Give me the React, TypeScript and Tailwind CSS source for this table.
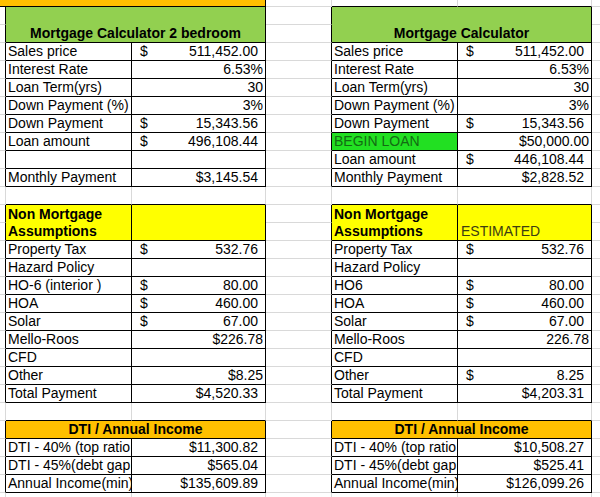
import React from "react";

type Spec = {
  r: number;
  c: number;
  rs: number;
  cs: number;
  table: boolean;
  cls: string;
  node: React.ReactNode;
};

const COLS = 7;
const ROWS = 29;

const lab = (t: string) => (
  <div className="pl-[2px] whitespace-nowrap overflow-hidden">{t}</div>
);
const acc = (v: string) => (
  <div className="flex justify-between pl-[8px] pr-[7px] whitespace-nowrap">
    <span>$</span>
    <span>{v}</span>
  </div>
);
const pad = (v: string) => (
  <div className="text-right pr-[7px] whitespace-nowrap">{v}</div>
);
const gen = (v: string) => (
  <div className="text-right pr-[2px] whitespace-nowrap">{v}</div>
);

const specs: Spec[] = [];
const add = (
  r: number,
  c: number,
  node: React.ReactNode,
  opts: Partial<Spec> = {}
) => {
  specs.push({ r, c, rs: 1, cs: 1, table: true, cls: "", node, ...opts });
};

// top orange strip
add(0, 0, null, { cs: 3, cls: "bg-[#ffc000]" });

const mortgageLeft: [React.ReactNode, React.ReactNode][] = [
  [lab("Sales price"), acc("511,452.00")],
  [lab("Interest Rate"), gen("6.53%")],
  [lab("Loan Term(yrs)"), gen("30")],
  [lab("Down Payment (%)"), gen("3%")],
  [lab("Down Payment"), acc("15,343.56")],
  [lab("Loan amount"), acc("496,108.44")],
  [null, null],
  [lab("Monthly Payment"), pad("$3,145.54")],
];

const mortgageRight: [React.ReactNode, React.ReactNode][] = [
  [lab("Sales price"), acc("511,452.00")],
  [lab("Interest Rate"), gen("6.53%")],
  [lab("Loan Term(yrs)"), gen("30")],
  [lab("Down Payment (%)"), gen("3%")],
  [lab("Down Payment"), acc("15,343.56")],
  [
    <div className="pl-[2px] whitespace-nowrap overflow-hidden text-[#136b13]">
      BEGIN LOAN
    </div>,
    gen("$50,000.00"),
  ],
  [lab("Loan amount"), acc("446,108.44")],
  [lab("Monthly Payment"), pad("$2,828.52")],
];

const nonLeft: [React.ReactNode, React.ReactNode][] = [
  [lab("Property Tax"), acc("532.76")],
  [lab("Hazard Policy"), null],
  [lab("HO-6 (interior )"), acc("80.00")],
  [lab("HOA"), acc("460.00")],
  [lab("Solar"), acc("67.00")],
  [lab("Mello-Roos"), gen("$226.78")],
  [lab("CFD"), null],
  [lab("Other"), gen("$8.25")],
  [lab("Total Payment"), pad("$4,520.33")],
];

const nonRight: [React.ReactNode, React.ReactNode][] = [
  [lab("Property Tax"), acc("532.76")],
  [lab("Hazard Policy"), null],
  [lab("HO6"), acc("80.00")],
  [lab("HOA"), acc("460.00")],
  [lab("Solar"), acc("67.00")],
  [lab("Mello-Roos"), gen("226.78")],
  [lab("CFD"), null],
  [lab("Other"), acc("8.25")],
  [lab("Total Payment"), pad("$4,203.31")],
];

const dtiLeft: [React.ReactNode, React.ReactNode][] = [
  [lab("DTI - 40% (top ratio"), pad("$11,300.82")],
  [lab("DTI - 45%(debt gap"), pad("$565.04")],
  [lab("Annual Income(min)"), pad("$135,609.89")],
];

const dtiRight: [React.ReactNode, React.ReactNode][] = [
  [lab("DTI - 40% (top ratio"), pad("$10,508.27")],
  [lab("DTI - 45%(debt gap"), pad("$525.41")],
  [lab("Annual Income(min)"), pad("$126,099.26")],
];

const buildTable = (
  c0: number,
  title: string,
  mort: [React.ReactNode, React.ReactNode][],
  non: [React.ReactNode, React.ReactNode][],
  dti: [React.ReactNode, React.ReactNode][],
  estimated: boolean,
  beginRow: number
) => {
  add(
    1,
    c0,
    <div className="h-full flex items-end justify-center font-bold whitespace-nowrap">
      {title}
    </div>,
    { rs: 2, cs: 2, cls: "bg-[#92d050]" }
  );
  mort.forEach(([a, b], i) => {
    const r = 3 + i;
    add(r, c0, a, { cls: r === beginRow ? "bg-[#22e022]" : "" });
    add(r, c0 + 1, b);
  });
  add(
    12,
    c0,
    <div className="h-full flex flex-col justify-end pl-[2px] font-bold whitespace-nowrap">
      <span>Non Mortgage</span>
      <span>Assumptions</span>
    </div>,
    { rs: 2, cls: "bg-[#ffff00]" }
  );
  add(
    12,
    c0 + 1,
    estimated ? (
      <div className="h-full flex items-end pl-[3px] text-[#3d3d12]">ESTIMATED</div>
    ) : null,
    { rs: 2, cls: "bg-[#ffff00]" }
  );
  non.forEach(([a, b], i) => {
    add(14 + i, c0, a);
    add(14 + i, c0 + 1, b);
  });
  add(
    24,
    c0,
    <div className="text-center font-bold whitespace-nowrap">DTI / Annual Income</div>,
    { cs: 2, cls: "bg-[#ffc000]" }
  );
  dti.forEach(([a, b], i) => {
    add(25 + i, c0, a);
    add(25 + i, c0 + 1, b);
  });
};

buildTable(1, "Mortgage Calculator 2 bedroom", mortgageLeft, nonLeft, dtiLeft, false, -1);
buildTable(4, "Mortgage Calculator", mortgageRight, nonRight, dtiRight, true, 8);

// occupancy
const owner: number[][] = Array.from({ length: ROWS }, () =>
  Array.from({ length: COLS }, () => -1)
);
specs.forEach((s, i) => {
  for (let rr = s.r; rr < s.r + s.rs; rr++)
    for (let cc = s.c; cc < s.c + s.cs; cc++) owner[rr][cc] = i;
});
const filler: Spec[] = [];
for (let r = 0; r < ROWS; r++)
  for (let c = 0; c < COLS; c++)
    if (owner[r][c] === -1)
      filler.push({ r, c, rs: 1, cs: 1, table: false, cls: "", node: null });

const all = [...specs, ...filler].sort((a, b) => a.r - b.r || a.c - b.c);

const isTbl = (r: number, c: number) => {
  if (r < 0 || r >= ROWS || c < 0 || c >= COLS) return false;
  const o = owner[r][c];
  return o >= 0 && specs[o].table;
};

const RS: Record<number, string> = { 1: "", 2: "row-span-2" };
const CS: Record<number, string> = { 1: "", 2: "col-span-2", 3: "col-span-3" };

export default function App() {
  return (
    <div className="w-[600px] h-[497px] overflow-hidden bg-white text-black font-['Liberation_Sans',Arial,sans-serif] text-[14px] leading-[17px]">
      <div className="grid w-[630px] grid-cols-[6px_126px_134px_66px_126px_134px_38px] grid-rows-[7px_repeat(28,18px)]">
        {all.map((s) => {
          let blackR = s.table;
          for (let rr = s.r; rr < s.r + s.rs; rr++)
            if (isTbl(rr, s.c + s.cs)) blackR = true;
          let blackB = s.table;
          for (let cc = s.c; cc < s.c + s.cs; cc++)
            if (isTbl(s.r + s.rs, cc)) blackB = true;
          const rc = blackR ? "border-r-black" : "border-r-[#d9d9d9]";
          const bc = blackB ? "border-b-black" : "border-b-[#d9d9d9]";
          return (
            <div
              key={`${s.r}-${s.c}`}
              className={`border-r border-b overflow-hidden ${rc} ${bc} ${RS[s.rs]} ${CS[s.cs]} ${s.cls}`}
            >
              {s.node}
            </div>
          );
        })}
      </div>
    </div>
  );
}
